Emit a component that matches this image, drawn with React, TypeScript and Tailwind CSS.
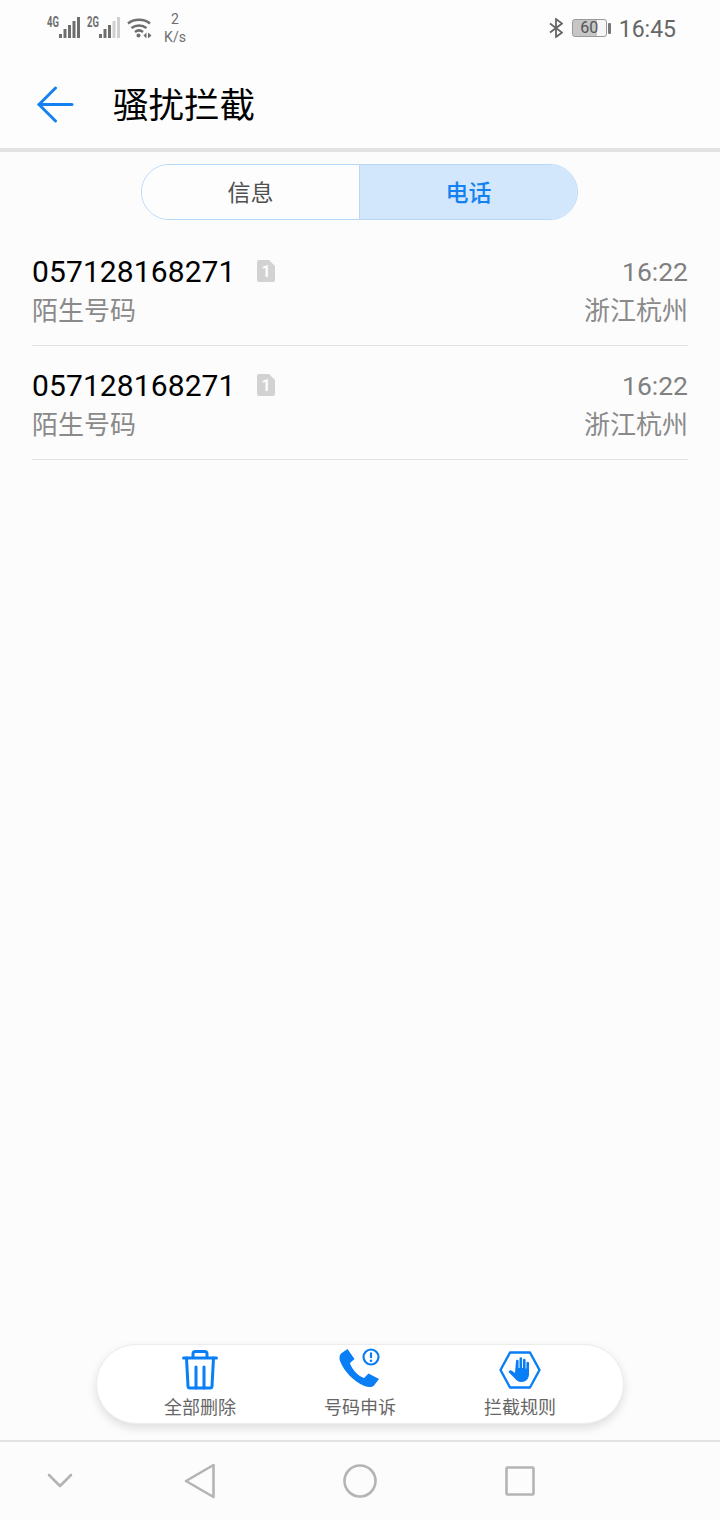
const fontStack = { fontFamily: '"Roboto", "Noto Sans CJK SC", sans-serif' }

function Signal({ level }: { level: number }) {
  const bars = [
    { x: 0, h: 4 },
    { x: 4.5, h: 9 },
    { x: 9, h: 13 },
    { x: 13.5, h: 17 },
    { x: 18, h: 21 },
  ]
  return (
    <svg width="21" height="21" viewBox="0 0 21 21">
      {bars.map((b, i) => (
        <rect key={i} x={b.x} y={21 - b.h} width="3" height={b.h} fill={i < level ? "#6e6e6e" : "#d0d0d0"} />
      ))}
    </svg>
  )
}

function NetIcon({ label, level }: { label: string; level: number }) {
  return (
    <div className="flex items-start">
      <span className="w-[12px] text-[14px] leading-[11px] font-bold text-[#6e6e6e] scale-x-[0.68] origin-left whitespace-nowrap">{label}</span>
      <Signal level={level} />
    </div>
  )
}

function Row() {
  return (
    <div className="h-[114px] flex flex-col border-b border-[#e0e0e0]">
      <div className="flex items-center justify-between mt-[22px]">
        <div className="flex items-center">
          <span className="text-[30px] leading-[36px] tracking-[0.1px] text-black">057128168271</span>
          <svg className="ml-[20px] mb-[3px]" width="20" height="24" viewBox="0 0 20 24">
            <path d="M3 1h10l6 6v14a2 2 0 0 1-2 2H3a2 2 0 0 1-2-2V3a2 2 0 0 1 2-2z" fill="#d2d2d2" />
            <text x="10" y="18" fontSize="16" fontWeight="700" textAnchor="middle" fill="#fcfcfc">1</text>
          </svg>
        </div>
        <span className="text-[26.5px] leading-[36px] text-[#808080]">16:22</span>
      </div>
      <div className="flex items-center justify-between mt-[3px]">
        <span className="text-[26px] leading-[36px] text-[#8a8a8a]">陌生号码</span>
        <span className="text-[26px] leading-[36px] text-[#8a8a8a]">浙江杭州</span>
      </div>
    </div>
  )
}

function ActionItem({ label, children }: { label: string; children: React.ReactNode }) {
  return (
    <div className="w-[160px] flex flex-col items-center">
      <div className="h-[44px] w-full flex items-center justify-center">{children}</div>
      <span className="mt-[4px] text-[18px] leading-[24px] text-[#666666]">{label}</span>
    </div>
  )
}

export default function App() {
  return (
    <div className="w-[720px] h-[1520px] flex flex-col bg-[#fcfcfc] overflow-hidden" style={fontStack}>
      {/* status bar */}
      <div className="h-[56px] flex items-start justify-between pl-[47px] pr-[44px] shrink-0 bg-[#fdfdfd]">
        <div className="flex items-start pt-[17px]">
          <NetIcon label="4G" level={5} />
          <div className="w-[7px]" />
          <NetIcon label="2G" level={3} />
          <svg className="ml-[7px] mt-[1px]" width="25" height="20" viewBox="0 0 25 20" fill="none" stroke="#6e6e6e" strokeWidth="2.500">
            <path d="M1 5.500C7 .5 17 .5 23 5.500" />
            <path d="M4.500 10C9 6.500 15 6.500 19.500 10" />
            <path d="M8 14C10.500 12 13.500 12 16 14" />
            <circle cx="11.500" cy="17.500" r="2" fill="#6e6e6e" stroke="none" />
            <path d="M19.500 14.500v6l-3-3z" fill="#6e6e6e" stroke="none" />
            <path d="M21 14.500v6l3.500-3z" fill="#6e6e6e" stroke="none" />
          </svg>
          <div className="ml-[10px] -mt-[7px] w-[26px] flex flex-col items-center text-[14px] leading-[18px] text-[#6e6e6e]">
            <span>2</span>
            <span>K/s</span>
          </div>
        </div>
        <div className="flex items-center h-[56px] text-[#666666]">
          <svg width="14" height="20" viewBox="0 0 14 20" fill="none" stroke="#666666" strokeWidth="1.800">
            <path d="M1 5.500l12 9-6 4.500V1l6 4.500-12 9" />
          </svg>
          <div className="ml-[9px] w-[35px] h-[18px] rounded-[3px] border border-[#9a9a9a] bg-[linear-gradient(90deg,#c6c6c6_0,#c6c6c6_72%,#f6f6f6_72%)] flex items-center justify-center text-[16px] leading-[18px] text-[#555555]">
            60
          </div>
          <div className="ml-[1px] w-[3px] h-[11px] bg-[#777777] rounded-[1px]" />
          <span className="ml-[8px] mt-[3px] text-[23px] leading-[28px]">16:45</span>
        </div>
      </div>

      {/* header */}
      <div className="h-[96px] pt-[4px] flex items-center shrink-0 bg-[#fdfdfd] border-b-4 border-[#e2e2e2]">
        <svg className="ml-[37px]" width="37" height="37" viewBox="0 0 37 37" fill="none" stroke="#1382f0" strokeWidth="3" strokeLinecap="round" strokeLinejoin="round">
          <path d="M18.500 2L2 18.500 18.500 35" />
          <path d="M2 18.500h33" />
        </svg>
        <span className="ml-[39px] mt-[3px] text-[35.5px] leading-[44px] text-black">骚扰拦截</span>
      </div>

      {/* tabs */}
      <div className="flex justify-center mt-[12px] ml-[-1px] shrink-0">
        <div className="w-[437px] h-[56px] flex rounded-full border border-[#b5d8f7] overflow-hidden">
          <div className="w-[218px] pt-[4px] flex items-center justify-center text-[23px] text-[#505050] bg-[#fdfdfd] border-r border-[#b5d8f7]">信息</div>
          <div className="flex-1 pt-[4px] flex items-center justify-center text-[23px] font-medium text-[#1382f0] bg-[#d3e7fc]">电话</div>
        </div>
      </div>

      {/* list */}
      <div className="flex-1 px-[32px] pt-[12px]">
        <Row />
        <Row />
      </div>

      {/* floating actions */}
      <div className="flex justify-center shrink-0 mb-[16px]">
        <div className="w-[528px] h-[80px] pt-[3px] flex justify-center items-start rounded-full bg-white border border-[#ececec] shadow-[0_4px_10px_rgba(0,0,0,0.12)]">
          <ActionItem label="全部删除">
            <svg width="36" height="40" viewBox="0 0 36 40" fill="none" stroke="#0a7ef5" strokeWidth="3" strokeLinecap="round" strokeLinejoin="round">
              <path d="M1.500 8h33" />
              <path d="M11 7V4a2.500 2.500 0 0 1 2.500-2.500h9A2.500 2.500 0 0 1 25 4v3" />
              <path d="M4.500 8l1.500 28a2 2 0 0 0 2 2h20a2 2 0 0 0 2-2l1.500-28" />
              <path d="M14 17v21M22 17v21" />
            </svg>
          </ActionItem>
          <ActionItem label="号码申诉">
            <svg width="42" height="44" viewBox="0 0 42 44">
              <path d="M2 5.500L8.500 1l7 10-4.500 4c1.500 6 8 13 14 15l4.500-4.500L40 31l-5 6.500c-2 2-6 2-9.500 .5C14 33 5 23 1 13c-1-3-.5-6 1-7.500z" fill="#0a7ef5" />
              <circle cx="32" cy="9" r="7.500" fill="none" stroke="#0a7ef5" strokeWidth="2.200" />
              <path d="M32 4.500v5.500" stroke="#0a7ef5" strokeWidth="2.200" />
              <circle cx="32" cy="12.800" r="1.300" fill="#0a7ef5" />
            </svg>
          </ActionItem>
          <ActionItem label="拦截规则">
            <svg width="42" height="38" viewBox="0 0 42 38">
              <path d="M11 1.500h20L40.500 19 31 36.500H11L1.500 19z" fill="none" stroke="#0a7ef5" strokeWidth="2.400" strokeLinejoin="round" />
              <path d="M17 10a1.300 1.300 0 0 1 2.600 0v7h.9V7.500a1.300 1.300 0 0 1 2.600 0V17h.9V9a1.300 1.300 0 0 1 2.600 0v8.500h.8v-5.500a1.300 1.300 0 0 1 2.600 0v11c0 5-3.300 8-7.500 8-3.500 0-5.500-2-7.500-4.500l-5-5c-1-1.500 1-3 2.500-2l3.500 2.500z" fill="#0a7ef5" />
            </svg>
          </ActionItem>
        </div>
      </div>

      {/* nav bar */}
      <div className="h-[80px] border-t-2 border-[#e2e2e2] shrink-0 flex items-center bg-[#fcfcfc]">
        <svg className="ml-[47px]" width="26" height="16" viewBox="0 0 26 16" fill="none" stroke="#b4b4b4" strokeWidth="2.600" strokeLinecap="round" strokeLinejoin="round">
          <path d="M2 2l11 11L24 2" />
        </svg>
        <svg className="ml-[111px]" width="32" height="36" viewBox="0 0 32 36" fill="none" stroke="#b4b4b4" strokeWidth="2.600" strokeLinejoin="round">
          <path d="M29.500 2L2 18l27.500 16z" />
        </svg>
        <svg className="ml-[127px]" width="34" height="34" viewBox="0 0 34 34" fill="none" stroke="#b4b4b4" strokeWidth="2.600">
          <circle cx="17" cy="17" r="15.500" />
        </svg>
        <svg className="ml-[128px]" width="30" height="30" viewBox="0 0 30 30" fill="none" stroke="#b4b4b4" strokeWidth="2.600" strokeLinejoin="round">
          <rect x="1.500" y="1.500" width="27" height="27" rx="1" />
        </svg>
      </div>
    </div>
  )
}
